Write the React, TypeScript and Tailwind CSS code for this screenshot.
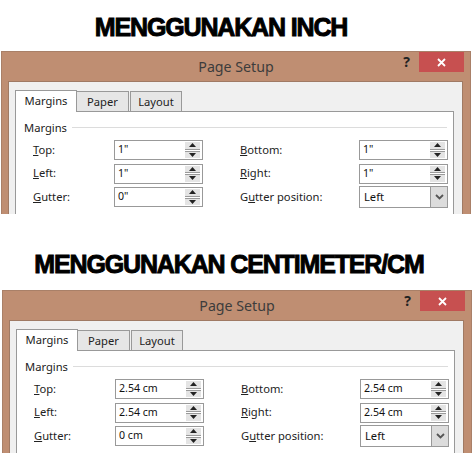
import type { ReactNode } from "react";

const uiFont = "font-['Noto_Sans',sans-serif]";

function Spin() {
  return (
    <div className="mr-[2px] flex h-[16px] w-[15px] flex-col gap-px">
      <div className="flex flex-1 items-center justify-center border-b border-[#9a9a9a] bg-[#e4e4e4]">
        <svg width="7" height="4" viewBox="0 0 7 4"><path d="M3.5 0 7 4H0z" fill="#222" /></svg>
      </div>
      <div className="flex flex-1 items-center justify-center border-t border-[#9a9a9a] bg-[#e4e4e4]">
        <svg width="7" height="4" viewBox="0 0 7 4"><path d="M0 0h7L3.5 4z" fill="#222" /></svg>
      </div>
    </div>
  );
}

function Field({ value }: { value: string }) {
  return (
    <div className="flex h-[20px] w-[89px] shrink-0 items-center justify-between border border-[#999] bg-white pl-[3px]">
      <span className="text-[10.6px] text-[#111]">{value}</span>
      <Spin />
    </div>
  );
}

function GutterSelect() {
  return (
    <div className="-my-px flex h-[22px] w-[89px] shrink-0 items-stretch justify-between border border-[#999] bg-white pl-[4px]">
      <span className="self-center text-[11.2px] text-[#111]">Left</span>
      <div className="flex w-[17px] items-center justify-center border-l border-[#999] bg-[#dcdcdc]">
        <svg width="9" height="6" viewBox="0 0 9 6"><path d="M1 1l3.5 3.5L8 1" fill="none" stroke="#555" strokeWidth="1.8" /></svg>
      </div>
    </div>
  );
}

function Row({ label, rightLabel, left, right }: { label: ReactNode; rightLabel: ReactNode; left: ReactNode; right: ReactNode }) {
  return (
    <div className="flex h-[20px] items-center">
      <span className="w-[82px] shrink-0 pl-px text-[11.2px] text-[#222]">{label}</span>
      {left}
      <span className="ml-[37px] w-[119px] shrink-0 text-[11.2px] text-[#222]">{rightLabel}</span>
      {right}
    </div>
  );
}

function Dialog({ top, bottom, gutter }: { top: string; bottom: string; gutter: string }) {
  return (
    <div className={`flex h-[163px] w-[470px] flex-col overflow-hidden border-t border-r border-l border-[#a98068] bg-[#bf8e72] ${uiFont}`}>
      <div className="relative flex h-[29px] shrink-0 items-center justify-center text-[14.2px] text-[#3c3c3c]">
        Page Setup
        <span className="absolute top-0 right-[60px] text-[14px] leading-[20px] font-bold text-[#222]">?</span>
        <div className="absolute top-0 right-[6px] flex h-[20px] w-[45px] items-center justify-center bg-[#c75050]">
          <svg width="9" height="9" viewBox="0 0 9 9"><path d="M1 1l7 7M8 1 1 8" stroke="#fff" strokeWidth="1.8" /></svg>
        </div>
      </div>
      <div className="mr-[7px] ml-[6px] flex-1 border-t border-r border-l border-[#a07a64] bg-[#f0f0f0] pt-[7px] pl-[6px]">
        <div className="flex h-[22px] items-end">
          <div className="relative z-10 -mb-px flex h-[22px] w-[62px] items-center justify-center border border-b-0 border-[#999] bg-white text-[11.2px] text-[#222]">Margins</div>
          <div className="flex h-[20px] w-[52px] items-center justify-center border-t border-r border-[#999] bg-[#e6e6e6] pt-px text-[11.2px] text-[#222]">Paper</div>
          <div className="ml-px flex h-[20px] w-[52px] items-center justify-center border-t border-r border-l border-[#999] bg-[#e6e6e6] pt-px text-[11.2px] text-[#222]">Layout</div>
        </div>
        <div className="mr-[8px] h-[120px] border border-[#999] bg-white pt-[7px] pl-[8px]">
          <div className="flex items-center pr-[6px]">
            <span className="text-[11.2px] leading-[17px] text-[#222]">Margins</span>
            <div className="ml-[5px] h-px flex-1 bg-[#dcdcdc]" />
          </div>
          <div className="mt-[4px] flex flex-col gap-[3.5px] pl-[8px]">
            <Row label={<><u>T</u>op:</>} rightLabel={<><u>B</u>ottom:</>} left={<Field value={top} />} right={<Field value={bottom} />} />
            <Row label={<><u>L</u>eft:</>} rightLabel={<><u>R</u>ight:</>} left={<Field value={top} />} right={<Field value={bottom} />} />
            <Row label={<><u>G</u>utter:</>} rightLabel={<>G<u>u</u>tter position:</>} left={<Field value={gutter} />} right={<GutterSelect />} />
          </div>
        </div>
      </div>
    </div>
  );
}

function Heading({ children }: { children: ReactNode }) {
  return (
    <h1 className="text-center font-['Liberation_Sans',sans-serif] text-[25px] leading-[29px] font-bold tracking-[-1.15px] text-black [-webkit-text-stroke:0.9px_black]">
      {children}
    </h1>
  );
}

export default function App() {
  return (
    <div className="h-[458px] w-[474px] overflow-hidden bg-white">
      <div className="pt-[13px] pr-[32px] pb-[9px]">
        <Heading>MENGGUNAKAN INCH</Heading>
      </div>
      <div className="pl-px">
        <Dialog top={'1"'} bottom={'1"'} gutter={'0"'} />
      </div>
      <div className="pt-[36px] pr-[16px] pb-[11px]">
        <Heading>MENGGUNAKAN CENTIMETER/CM</Heading>
      </div>
      <div className="pl-[2px]">
        <Dialog top="2.54 cm" bottom="2.54 cm" gutter="0 cm" />
      </div>
    </div>
  );
}
